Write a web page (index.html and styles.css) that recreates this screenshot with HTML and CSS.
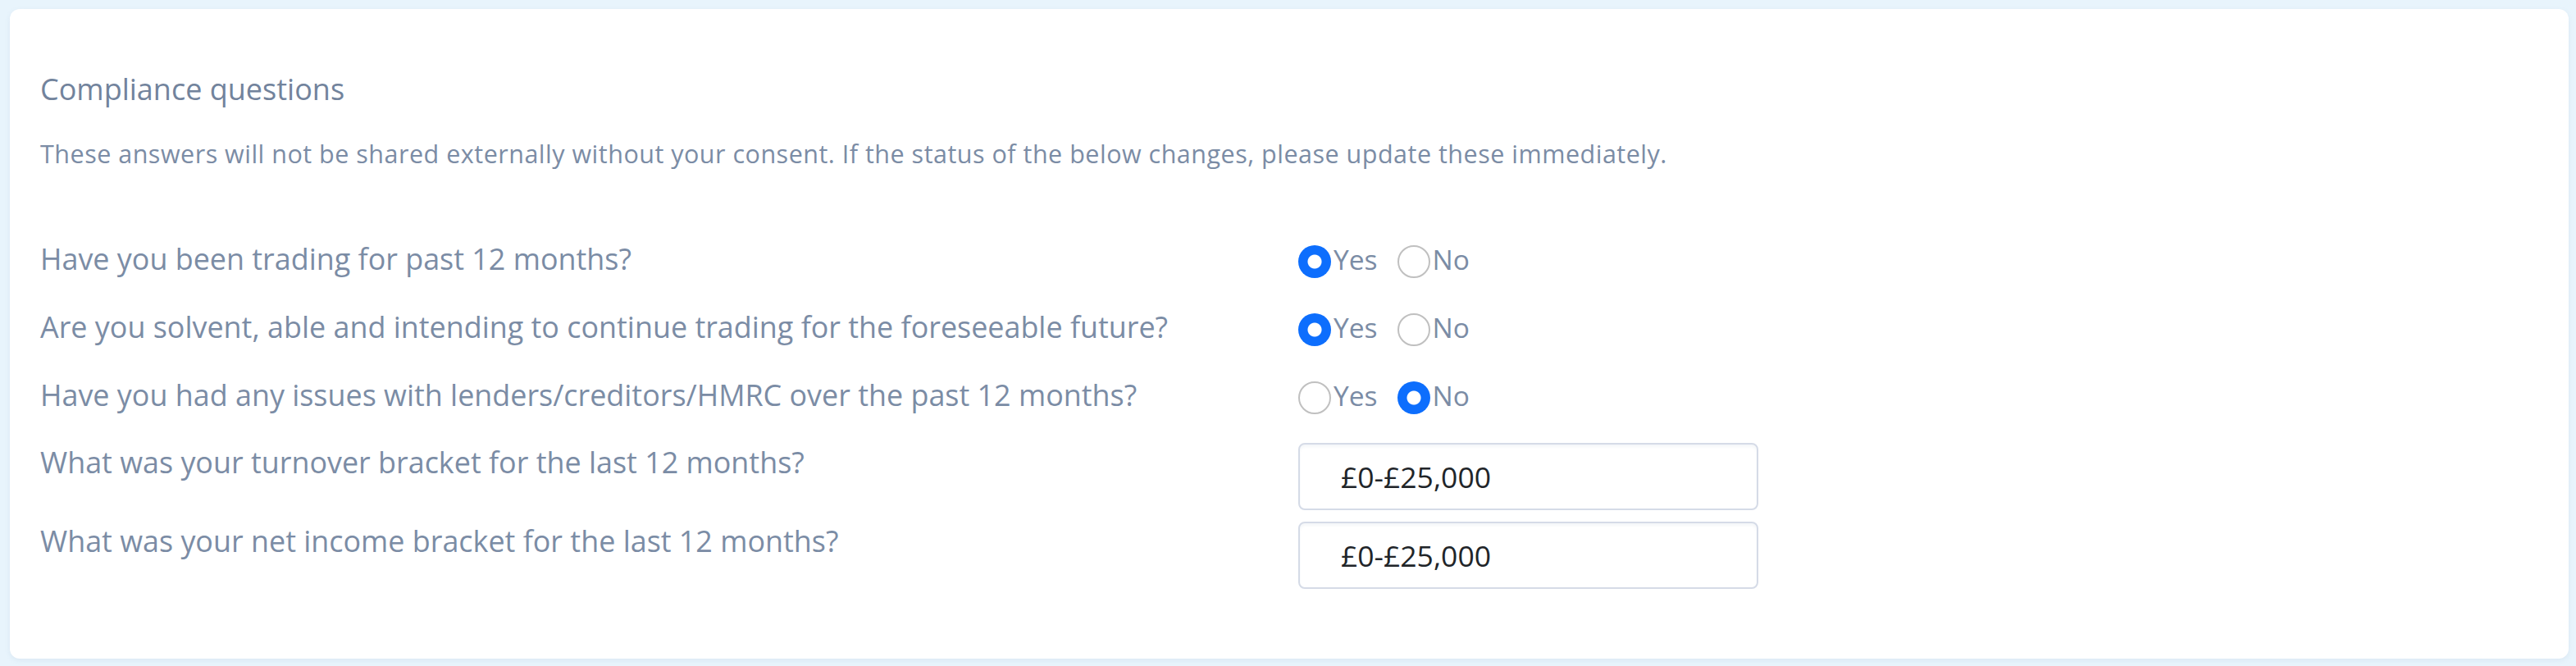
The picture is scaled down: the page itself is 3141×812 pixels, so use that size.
FILE: index.html
```html
<!DOCTYPE html>
<html lang="en">
<head>
<meta charset="utf-8">
<title>Compliance questions</title>
<link rel="stylesheet" href="styles.css">
</head>
<body>
<main class="card">
  <h2 class="title">Compliance questions</h2>
  <p class="subtitle">These answers will not be shared externally without your consent. If the status of the below changes, please update these immediately.</p>

  <div class="radio-rows">
    <div class="row">
      <span class="question">Have you been trading for past 12 months?</span>
      <div class="options">
        <label class="option"><input class="radio" type="radio" name="q1" checked><span>Yes</span></label>
        <label class="option"><input class="radio" type="radio" name="q1"><span>No</span></label>
      </div>
    </div>
    <div class="row">
      <span class="question">Are you solvent, able and intending to continue trading for the foreseeable future?</span>
      <div class="options">
        <label class="option"><input class="radio" type="radio" name="q2" checked><span>Yes</span></label>
        <label class="option"><input class="radio" type="radio" name="q2"><span>No</span></label>
      </div>
    </div>
    <div class="row">
      <span class="question">Have you had any issues with lenders/creditors/HMRC over the past 12 months?</span>
      <div class="options">
        <label class="option"><input class="radio" type="radio" name="q3"><span>Yes</span></label>
        <label class="option"><input class="radio" type="radio" name="q3" checked><span>No</span></label>
      </div>
    </div>
  </div>

  <div class="input-rows">
    <div class="irow">
      <span class="question">What was your turnover bracket for the last 12 months?</span>
      <div class="field">£0-£25,000</div>
    </div>
    <div class="irow">
      <span class="question">What was your net income bracket for the last 12 months?</span>
      <div class="field">£0-£25,000</div>
    </div>
  </div>
</main>
</body>
</html>
```

FILE: styles.css
```css
html, body {
  margin: 0;
  padding: 0;
}

body {
  background: #e8f4fc;
  font-family: "Open Sans", "Liberation Sans", sans-serif;
  color: #7788a1;
  padding: 11px 9px 9px 12px;
}

.card {
  box-sizing: border-box;
  height: 792px;
  background: #ffffff;
  border-radius: 12px;
  box-shadow: 0 2px 6px rgba(120, 150, 180, 0.12);
  padding: 74px 37px 0 37px;
}

.title {
  margin: 0;
  font-size: 36px;
  line-height: 48px;
  font-weight: 500;
  color: #72839c;
}

.subtitle {
  margin: 34px 0 0 0;
  font-size: 30.5px;
  letter-spacing: 0.5px;
  line-height: 40px;
  font-weight: 400;
  color: #7b8ca5;
}

.radio-rows {
  margin-top: 67px;
  display: flex;
  flex-direction: column;
}

.row {
  display: grid;
  grid-template-columns: 1534px auto;
  align-items: center;
  height: 83px;
}

.question {
  font-size: 35.9px;
  line-height: 48px;
  color: #7b8ca5;
}

.options {
  display: flex;
  align-items: center;
  gap: 24px;
}

.option {
  display: flex;
  align-items: center;
  gap: 3px;
  font-size: 33.5px;
  line-height: 48px;
  color: #7b8ca5;
}

.radio {
  appearance: none;
  -webkit-appearance: none;
  margin: 7px 0 0 0;
  width: 40px;
  height: 40px;
  box-sizing: border-box;
  border-radius: 50%;
  border: 2px solid #c0c0c0;
  background: #ffffff;
}

.radio:checked {
  border: 0;
  background: radial-gradient(circle, #ffffff 0 8px, #0d6efd 9px);
}

.input-rows {
  margin-top: 17px;
  display: flex;
  flex-direction: column;
  gap: 14px;
}

.irow {
  display: grid;
  grid-template-columns: 1534px auto;
  align-items: start;
}

.field {
  box-sizing: border-box;
  width: 561px;
  height: 82px;
  border: 2px solid #d5dbe7;
  border-radius: 8px;
  box-shadow: inset 0 3px 3px rgba(120, 140, 170, 0.07);
  padding-left: 50px;
  display: flex;
  align-items: center;
  font-size: 35.5px;
  color: #212529;
}
```
